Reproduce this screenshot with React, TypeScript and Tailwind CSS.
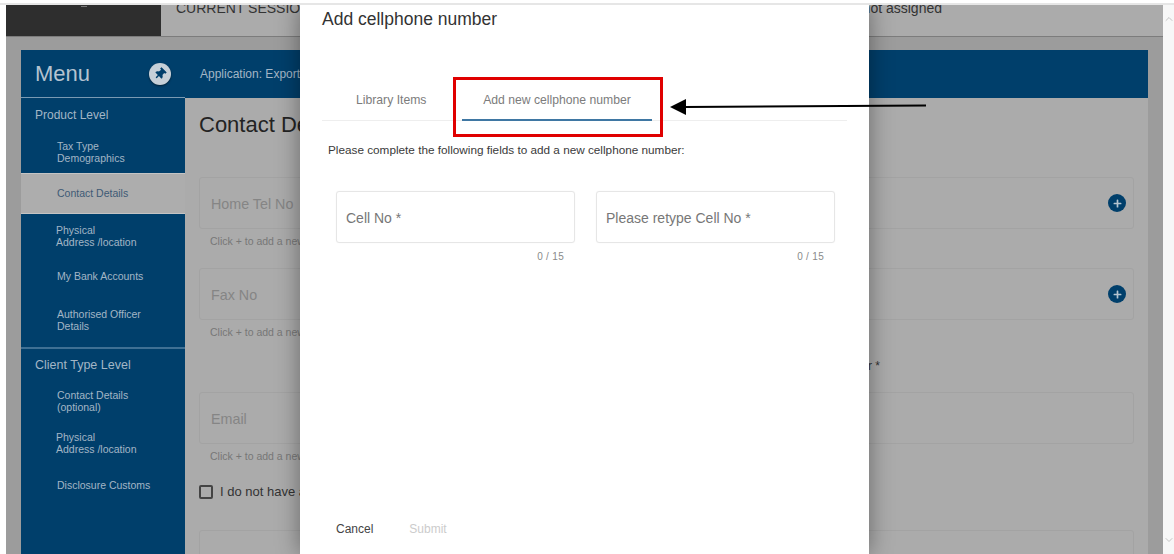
import { FaThumbtack, FaPlus } from "react-icons/fa"
import { ChevronUp, ChevronDown } from "lucide-react"

function MenuItem({ lines, className }: { lines: string[]; className: string }) {
  return (
    <div className={`text-[10.5px] leading-[12px] text-[#a3b6c6] ${className}`}>
      {lines.map((line) => (
        <div key={line}>{line}</div>
      ))}
    </div>
  )
}

function Sidebar() {
  return (
    <aside className="w-[164px] shrink-0 bg-[#003f6b]">
      <div className="h-[48px] flex items-center justify-between pl-[14px] pr-[14px] border-b border-[#7a9ab3]">
        <span className="text-[22px] text-[#b4c3d0]">Menu</span>
        <span className="w-[22px] h-[22px] rounded-full bg-[#c6d0d8] flex items-center justify-center shadow-[0_1px_2px_rgba(0,0,0,0.5)]">
          <FaThumbtack className="text-[#003f6b] text-[12px] rotate-45" />
        </span>
      </div>
      <div className="pt-[10px] pl-[14px] text-[12px] leading-[14px] text-[#a3b6c6]">Product Level</div>
      <MenuItem lines={["Tax Type", "Demographics"]} className="pl-[36px] mt-[18px]" />
      <div className="mt-[9px] h-[41px] bg-[#adadad] flex items-center pl-[36px] text-[10.5px] text-[#3d5a75] border-y border-[#c4c4c4]">
        Contact Details
      </div>
      <MenuItem lines={["Physical", "Address /location"]} className="pl-[35px] mt-[10px]" />
      <MenuItem lines={["My Bank Accounts"]} className="pl-[36px] mt-[22px]" />
      <MenuItem lines={["Authorised Officer", "Details"]} className="pl-[36px] mt-[26px]" />
      <div className="mt-[15px] h-[2px] bg-[#3f7094]" />
      <div className="pt-[9px] pl-[14px] text-[12.5px] leading-[14px] text-[#a3b6c6]">Client Type Level</div>
      <MenuItem lines={["Contact Details", "(optional)"]} className="pl-[36px] mt-[17px]" />
      <MenuItem lines={["Physical", "Address /location"]} className="pl-[35px] mt-[18px]" />
      <MenuItem lines={["Disclosure Customs"]} className="pl-[36px] mt-[24px]" />
      <div className="h-[200px]" />
    </aside>
  )
}

function FieldBox({ label, plus }: { label: string; plus?: boolean }) {
  return (
    <>
      <div className="h-[52px] flex items-center justify-between pl-[11px] pr-[7px] border border-[#a3a3a3] rounded-[3px]">
        <span className="mt-[3px] text-[14.3px] text-[#858585]">{label}</span>
        {plus && (
          <span className="w-[18px] h-[18px] rounded-full bg-[#003f6b] flex items-center justify-center">
            <FaPlus className="text-[#b5c4d0] text-[9px]" />
          </span>
        )}
      </div>
      <div className="mt-[6px] pl-[11px] text-[10.5px] leading-[12px] text-[#777]">Click + to add a new number</div>
    </>
  )
}

function Background() {
  return (
    <main className="flex-1 min-w-0 flex flex-col bg-[#9c9c9c] overflow-hidden">
      <div className="h-[32px] shrink-0 flex border-b border-[#7c7c7c] bg-[#ababab]">
        <div className="w-[155px] h-full bg-[#2e2e2e] flex justify-center">
          <span className="mt-[1px] w-[6px] h-[1px] bg-[#777]" />
        </div>
        <div className="flex-1 flex justify-between pl-[15px] pr-[221px] text-[14px] leading-[6px] text-[#333]">
          <span>CURRENT SESSION</span>
          <span>Session not assigned</span>
        </div>
      </div>
      <div className="flex-1 min-h-0 pt-[13px] pl-[15px] pr-[15px]">
        <div className="flex bg-[#ababab] h-[700px]">
          <Sidebar />
          <div className="flex-1 min-w-0">
            <div className="h-[48px] bg-[#003f6b] flex items-center pl-[15px] text-[12px] text-[#a3b6c6]">
              Application: Export
            </div>
            <div className="pl-[14px] pr-[14px]">
              <h1 className="mt-[14px] text-[22px] leading-[26px] text-[#232323]">Contact Details</h1>
              <div className="mt-[39px]">
                <FieldBox label="Home Tel No" plus />
              </div>
              <div className="mt-[21px]">
                <FieldBox label="Fax No" plus />
              </div>
              <div className="mt-[21px] flex justify-end pr-[254px] text-[12px] leading-[14px] text-[#333]">
                Cellphone number *
              </div>
              <div className="mt-[19px]">
                <FieldBox label="Email" />
              </div>
              <label className="mt-[22px] flex items-center gap-[7px] text-[13px] leading-[16px] text-[#333]">
                <span className="w-[14px] h-[14px] border-2 border-[#444] rounded-[2px]" />I do not have an email address
              </label>
              <div className="mt-[30px] h-[52px] border border-[#a3a3a3] rounded-[3px]" />
            </div>
          </div>
        </div>
      </div>
    </main>
  )
}

function CellField({ label }: { label: string }) {
  return (
    <div className="w-[239px]">
      <div className="h-[52px] flex items-center pl-[9px] pt-[2px] border border-[#e6e6e6] rounded-[3px] shadow-[0_0_1px_rgba(0,0,0,0.08)] text-[14px] text-[#777]">
        {label}
      </div>
      <div className="mt-[7px] pr-[11px] text-right text-[10px] leading-[14px] tracking-[0.3px] text-[#8a8a8a]">0 / 15</div>
    </div>
  )
}

function Modal() {
  return (
    <div className="absolute left-[300px] top-[5px] bottom-0 w-[569px] bg-white flex flex-col shadow-[0_0_22px_rgba(0,0,0,0.4)] z-10">
      <h2 className="pl-[22px] pt-[4px] text-[17.5px] leading-[20px] text-[#333]">Add cellphone number</h2>
      <div className="mt-[55px] mx-[22px] h-[37px] flex border-b border-[#eeeeee] text-[12.2px] text-[#7c7c7c]">
        <div className="w-[140px] h-full pl-[34px] pt-[7px]">Library Items</div>
        <div className="w-[190px] h-[37px] pt-[7px] text-center border-b-2 border-[#3f77a3]">Add new cellphone number</div>
      </div>
      <p className="mt-[22px] pl-[28px] text-[11.75px] leading-[14px] text-[#3a3a3a]">
        Please complete the following fields to add a new cellphone number:
      </p>
      <div className="mt-[34px] pl-[36px] flex gap-[21px]">
        <CellField label="Cell No *" />
        <CellField label="Please retype Cell No *" />
      </div>
      <div className="mt-auto pl-[36px] pb-[18px] flex gap-[36px] text-[12px] leading-[14px]">
        <span className="text-[#444]">Cancel</span>
        <span className="text-[#cccccc]">Submit</span>
      </div>
    </div>
  )
}

// annotation drawn on top of the screenshot
function Callout() {
  return (
    <>
      <div className="absolute left-[453px] top-[77px] w-[210px] h-[60px] border-[3px] border-[#e00000] z-20" />
      <svg className="absolute left-[668px] top-[95px] z-20" width="262" height="22" viewBox="0 0 262 22">
        <path d="M2 12 L18 4 L18 20 Z" fill="#000" />
        <path d="M16 12 L258 10.5" stroke="#000" strokeWidth="2" fill="none" />
      </svg>
    </>
  )
}

export default function App() {
  return (
    <div className="relative h-screen overflow-hidden bg-white font-['Liberation_Sans',Arial,sans-serif] flex flex-col">
      <div className="relative z-30 h-[5px] shrink-0 bg-white border-b-2 border-[#e6e6e6]" />
      <div className="flex-1 min-h-0 flex">
        <div className="w-[6px] shrink-0 bg-white" />
        <Background />
        <div className="relative z-30 w-[11px] shrink-0 bg-[#f7f7f7] flex flex-col justify-between items-center py-[8px] text-[#c4c4c4]">
          <ChevronUp size={12} />
          <ChevronDown size={12} />
        </div>
      </div>
      <Modal />
      <Callout />
    </div>
  )
}
